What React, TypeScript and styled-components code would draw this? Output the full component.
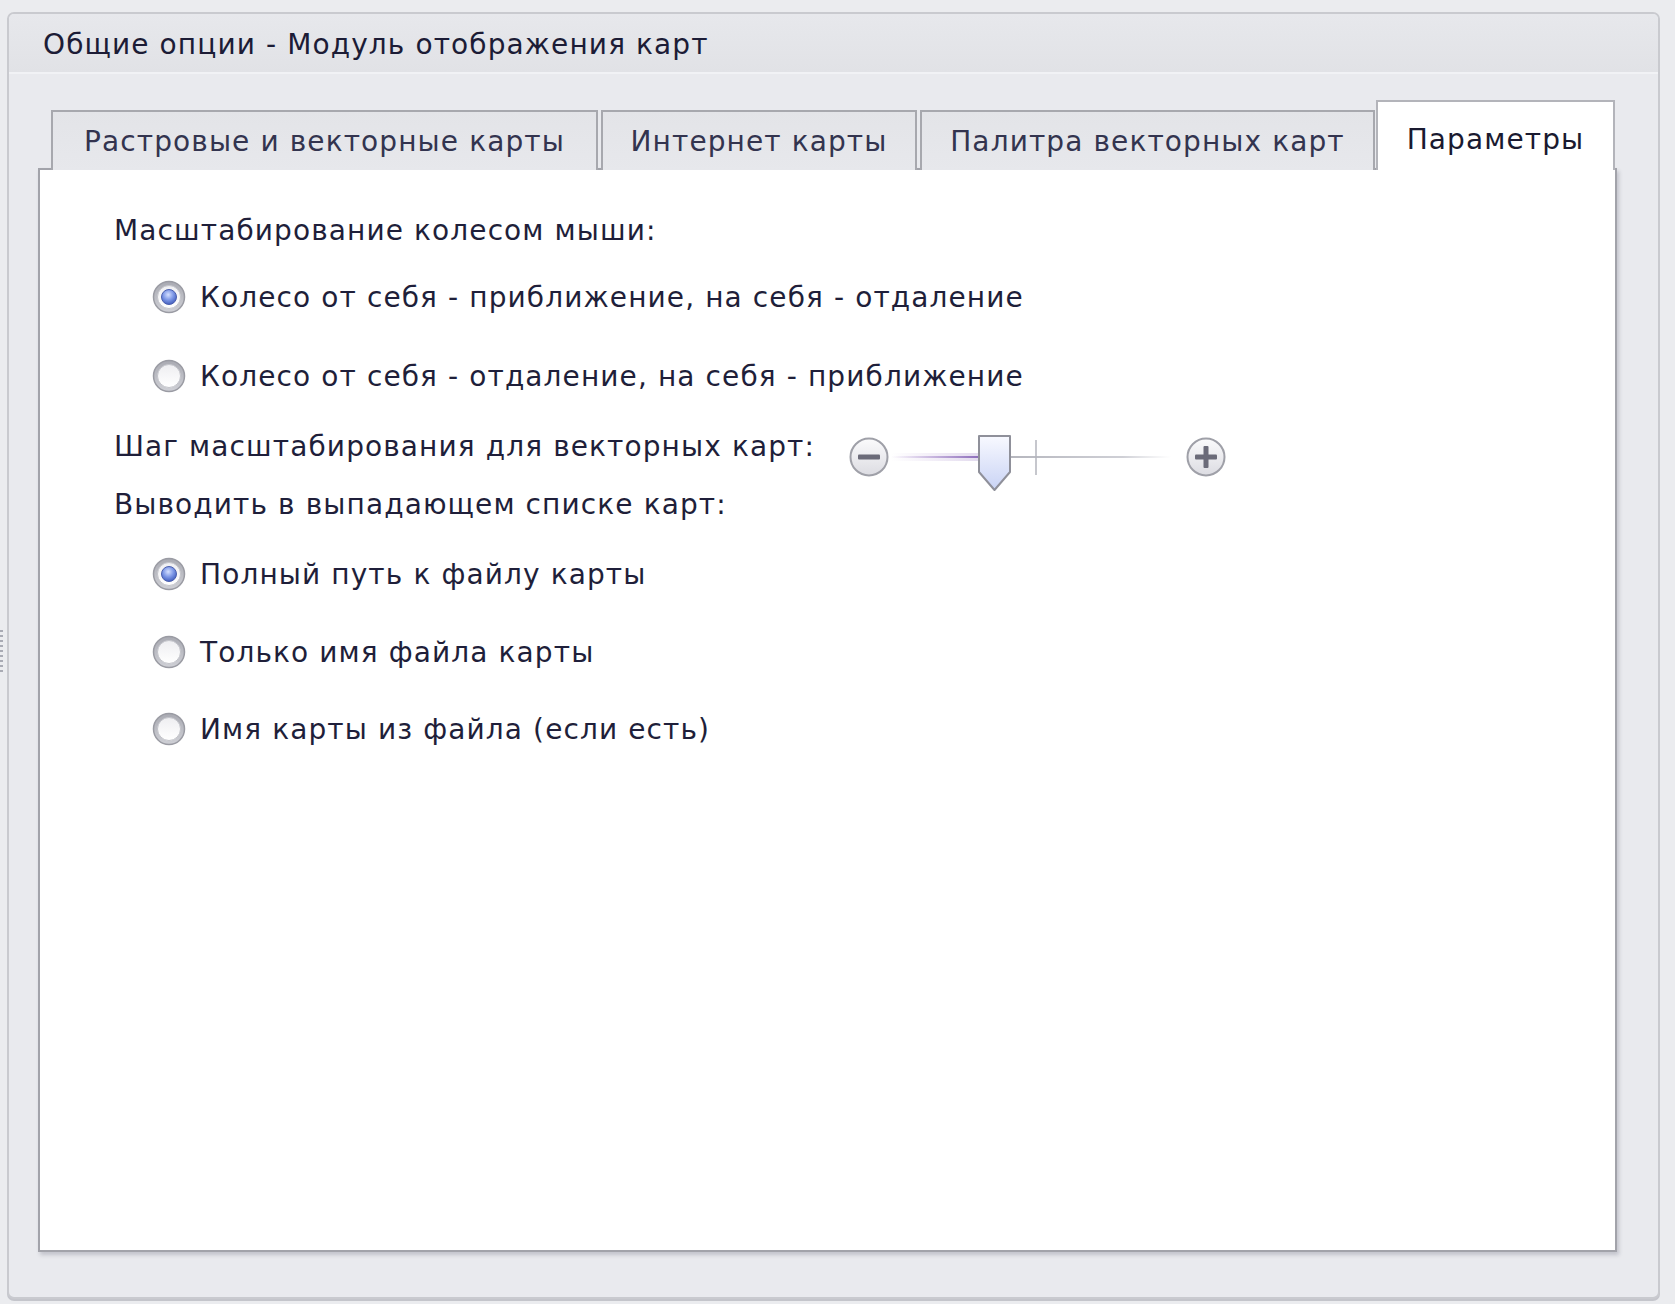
import styled, { createGlobalStyle } from 'styled-components'

const GlobalStyle = createGlobalStyle`
	html, body {
		margin: 0;
		padding: 0;
		background: #ebecef;
	}
	body {
		font-family: "DejaVu Sans", "Liberation Sans", sans-serif;
		letter-spacing: 1.1px;
		color: #1f1f3a;
	}
`

const Page = styled.div`
	display: flex;
	width: 1675px;
	height: 1304px;
	box-sizing: border-box;
	padding: 12px 15px 5px 0;
`

const Grip = styled.div`
	width: 3px;
	height: 44px;
	margin: 618px 4px 0 0;
	background-image: repeating-linear-gradient(
		to bottom,
		#a9abb4 0,
		#a9abb4 2px,
		transparent 2px,
		transparent 5px
	);
`

const GroupBox = styled.div`
	flex: 1;
	display: flex;
	flex-direction: column;
	border: 2px solid #c9cacf;
	border-radius: 7px;
	background: #e9eaee;
	box-shadow: 0 2px 0 #c4c5cb;
`

const GroupHeader = styled.div`
	height: 56px;
	display: flex;
	align-items: center;
	padding: 2px 0 0 34px;
	font-size: 28px;
	color: #1c1c36;
	background: linear-gradient(#e7e8ec, #e1e2e6);
	border-bottom: 2px solid #f1f2f5;
	border-radius: 5px 5px 0 0;
`

const GroupBody = styled.div`
	flex: 1;
	display: flex;
	flex-direction: column;
	padding: 26px 41px 45px 29px;
`

const TabStrip = styled.div`
	display: flex;
	align-items: flex-end;
	gap: 3px;
	padding-left: 13px;
	margin-bottom: -2px;
	position: relative;
	z-index: 1;
`

const Tab = styled.div<{ $active?: boolean; $width: number }>`
	box-sizing: border-box;
	width: ${p => p.$width}px;
	height: ${p => (p.$active ? 70 : 60)}px;
	margin-left: ${p => (p.$active ? -2 : 0)}px;
	display: flex;
	align-items: center;
	justify-content: center;
	padding-top: ${p => (p.$active ? 6 : 0)}px;
	font-size: 28px;
	white-space: nowrap;
	color: ${p => (p.$active ? '#1a1a30' : '#33344f')};
	border: 2px solid ${p => (p.$active ? '#b3b4ba' : '#a7a8ae')};
	border-bottom: none;
	background: ${p => (p.$active ? '#ffffff' : 'linear-gradient(#e3e4e8, #e7e8ec)')};
`

const Panel = styled.div`
	flex: 1;
	display: flex;
	flex-direction: column;
	background: #ffffff;
	border: 2px solid #a2a3aa;
	box-shadow: 2px 3px 4px rgba(60, 60, 80, 0.22);
	padding: 43px 0 0 74px;
`

const Row = styled.div<{ $top: number; $indent?: number }>`
	display: flex;
	align-items: center;
	height: 34px;
	margin-top: ${p => p.$top}px;
	padding-left: ${p => p.$indent || 0}px;
	font-size: 28px;
	white-space: nowrap;
`

const RadioLabel = styled.span`
	margin-left: 14px;
`

const SliderBox = styled.div`
	align-self: flex-start;
	margin: -2px 0 0 34px;
	height: 34px;
	overflow: visible;
`

const Radio = ({ checked }: { checked?: boolean }) => (
	<svg width="34" height="34" viewBox="0 0 34 34">
		<defs>
			<linearGradient id="ringG" x1="0" y1="0" x2="0" y2="1">
				<stop offset="0" stopColor="#a9aab2" />
				<stop offset="1" stopColor="#cfd0d6" />
			</linearGradient>
			<linearGradient id="innerG" x1="0" y1="0" x2="0" y2="1">
				<stop offset="0" stopColor="#eeeef1" />
				<stop offset="1" stopColor="#ffffff" />
			</linearGradient>
			<radialGradient id="dotG" cx="0.45" cy="0.35" r="0.7">
				<stop offset="0" stopColor="#d5e0ff" />
				<stop offset="0.5" stopColor="#7d97e6" />
				<stop offset="1" stopColor="#3a56b8" />
			</radialGradient>
		</defs>
		<circle cx="17" cy="17" r="15.5" fill="url(#ringG)" stroke="#9a9ba3" strokeWidth="1.5" />
		<circle cx="17" cy="17" r="11.5" fill="url(#innerG)" stroke="#c3c4ca" strokeWidth="1" />
		{checked && <circle cx="17" cy="17" r="7.5" fill="url(#dotG)" stroke="#4b5fae" strokeWidth="1" />}
	</svg>
)

const ZoomSlider = () => (
	<svg width="380" height="70" viewBox="0 0 380 70">
		<defs>
			<linearGradient id="btnG" x1="0" y1="0" x2="0" y2="1">
				<stop offset="0" stopColor="#fbfbfc" />
				<stop offset="1" stopColor="#dcdce2" />
			</linearGradient>
			<linearGradient id="thumbG" x1="0" y1="0" x2="0" y2="1">
				<stop offset="0" stopColor="#f8f9ff" />
				<stop offset="1" stopColor="#c9d3f5" />
			</linearGradient>
			<linearGradient id="leftG" gradientUnits="userSpaceOnUse" x1="42" y1="0" x2="130" y2="0">
				<stop offset="0" stopColor="#a07cc8" stopOpacity="0" />
				<stop offset="1" stopColor="#8e6fbb" stopOpacity="1" />
			</linearGradient>
			<linearGradient id="rightG" gradientUnits="userSpaceOnUse" x1="162" y1="0" x2="322" y2="0">
				<stop offset="0" stopColor="#9d9ea8" stopOpacity="1" />
				<stop offset="0.7" stopColor="#b8b9c2" stopOpacity="0.9" />
				<stop offset="1" stopColor="#c8c9d0" stopOpacity="0" />
			</linearGradient>
		</defs>
		<circle cx="20" cy="30" r="18.5" fill="url(#btnG)" stroke="#9fa0a8" strokeWidth="2" />
		<rect x="9" y="27.5" width="22" height="5" rx="1" fill="#6b6b79" />
		<line x1="42" y1="30" x2="130" y2="30" stroke="url(#leftG)" strokeWidth="8" strokeOpacity="0.25" />
		<line x1="42" y1="30" x2="130" y2="30" stroke="url(#leftG)" strokeWidth="2" />
		<line x1="162" y1="30" x2="322" y2="30" stroke="url(#rightG)" strokeWidth="1.5" />
		<line x1="187" y1="13" x2="187" y2="48" stroke="#b3b4bc" strokeWidth="1.5" />
		<path d="M130,9 H161 V45 L145.5,63 L130,45 Z" fill="url(#thumbG)" stroke="#8f909a" strokeWidth="2" strokeLinejoin="round" />
		<circle cx="357" cy="30" r="18.5" fill="url(#btnG)" stroke="#9fa0a8" strokeWidth="2" />
		<rect x="346" y="27.5" width="22" height="5" rx="1" fill="#6b6b79" />
		<rect x="354.5" y="19" width="5" height="22" rx="1" fill="#6b6b79" />
	</svg>
)

const tabs = [
	{ label: 'Растровые и векторные карты', width: 547 },
	{ label: 'Интернет карты', width: 316 },
	{ label: 'Палитра векторных карт', width: 455 },
	{ label: 'Параметры', width: 239, active: true },
]

export default function App() {
	return (
		<>
			<GlobalStyle />
			<Page>
				<Grip />
				<GroupBox>
					<GroupHeader>Общие опции - Модуль отображения карт</GroupHeader>
					<GroupBody>
						<TabStrip>
							{tabs.map(t => (
								<Tab key={t.label} $width={t.width} $active={t.active}>
									{t.label}
								</Tab>
							))}
						</TabStrip>
						<Panel>
							<Row $top={0}>Масштабирование колесом мыши:</Row>
							<Row $top={33} $indent={38}>
								<Radio checked />
								<RadioLabel>Колесо от себя - приближение, на себя - отдаление</RadioLabel>
							</Row>
							<Row $top={45} $indent={38}>
								<Radio />
								<RadioLabel>Колесо от себя - отдаление, на себя - приближение</RadioLabel>
							</Row>
							<Row $top={36}>
								Шаг масштабирования для векторных карт:
								<SliderBox>
									<ZoomSlider />
								</SliderBox>
							</Row>
							<Row $top={24}>Выводить в выпадающем списке карт:</Row>
							<Row $top={36} $indent={38}>
								<Radio checked />
								<RadioLabel>Полный путь к файлу карты</RadioLabel>
							</Row>
							<Row $top={44} $indent={38}>
								<Radio />
								<RadioLabel>Только имя файла карты</RadioLabel>
							</Row>
							<Row $top={43} $indent={38}>
								<Radio />
								<RadioLabel>Имя карты из файла (если есть)</RadioLabel>
							</Row>
						</Panel>
					</GroupBody>
				</GroupBox>
			</Page>
		</>
	)
}
